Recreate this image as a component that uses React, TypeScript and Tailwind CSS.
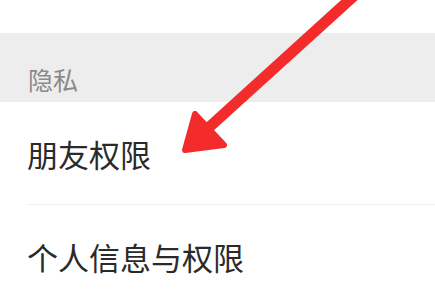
export default function App() {
  return (
    <div
      className="relative w-[435px] h-[302px] overflow-hidden bg-white"
      style={{ fontFamily: '"Noto Sans CJK SC", "Noto Sans", sans-serif' }}
    >
      <div className="h-[33px]" />

      <div className="h-[69px] bg-[#ededed] flex items-center pt-[24px] pl-[28px]">
        <span className="text-[25px] leading-none text-[#8a8a8a]">隐私</span>
      </div>

      <div className="ml-[27px] h-[103px] flex items-center border-b border-[#efefef]">
        <span className="text-[31px] leading-none text-[#2a2a2a]">朋友权限</span>
      </div>

      <div className="ml-[27px] h-[102px] flex items-center">
        <span className="text-[31px] leading-none text-[#2a2a2a]">个人信息与权限</span>
      </div>

      {/* annotation arrow */}
      <svg
        className="absolute inset-0 pointer-events-none"
        width="435"
        height="302"
        viewBox="0 0 435 302"
      >
        <line x1="356" y1="-6" x2="205" y2="131" stroke="#f32b2b" strokeWidth="11" strokeLinecap="round" />
        <polygon
          points="185,150 195,114 224,145"
          fill="#f32b2b"
          stroke="#f32b2b"
          strokeWidth="6"
          strokeLinejoin="round"
        />
      </svg>
    </div>
  );
}
